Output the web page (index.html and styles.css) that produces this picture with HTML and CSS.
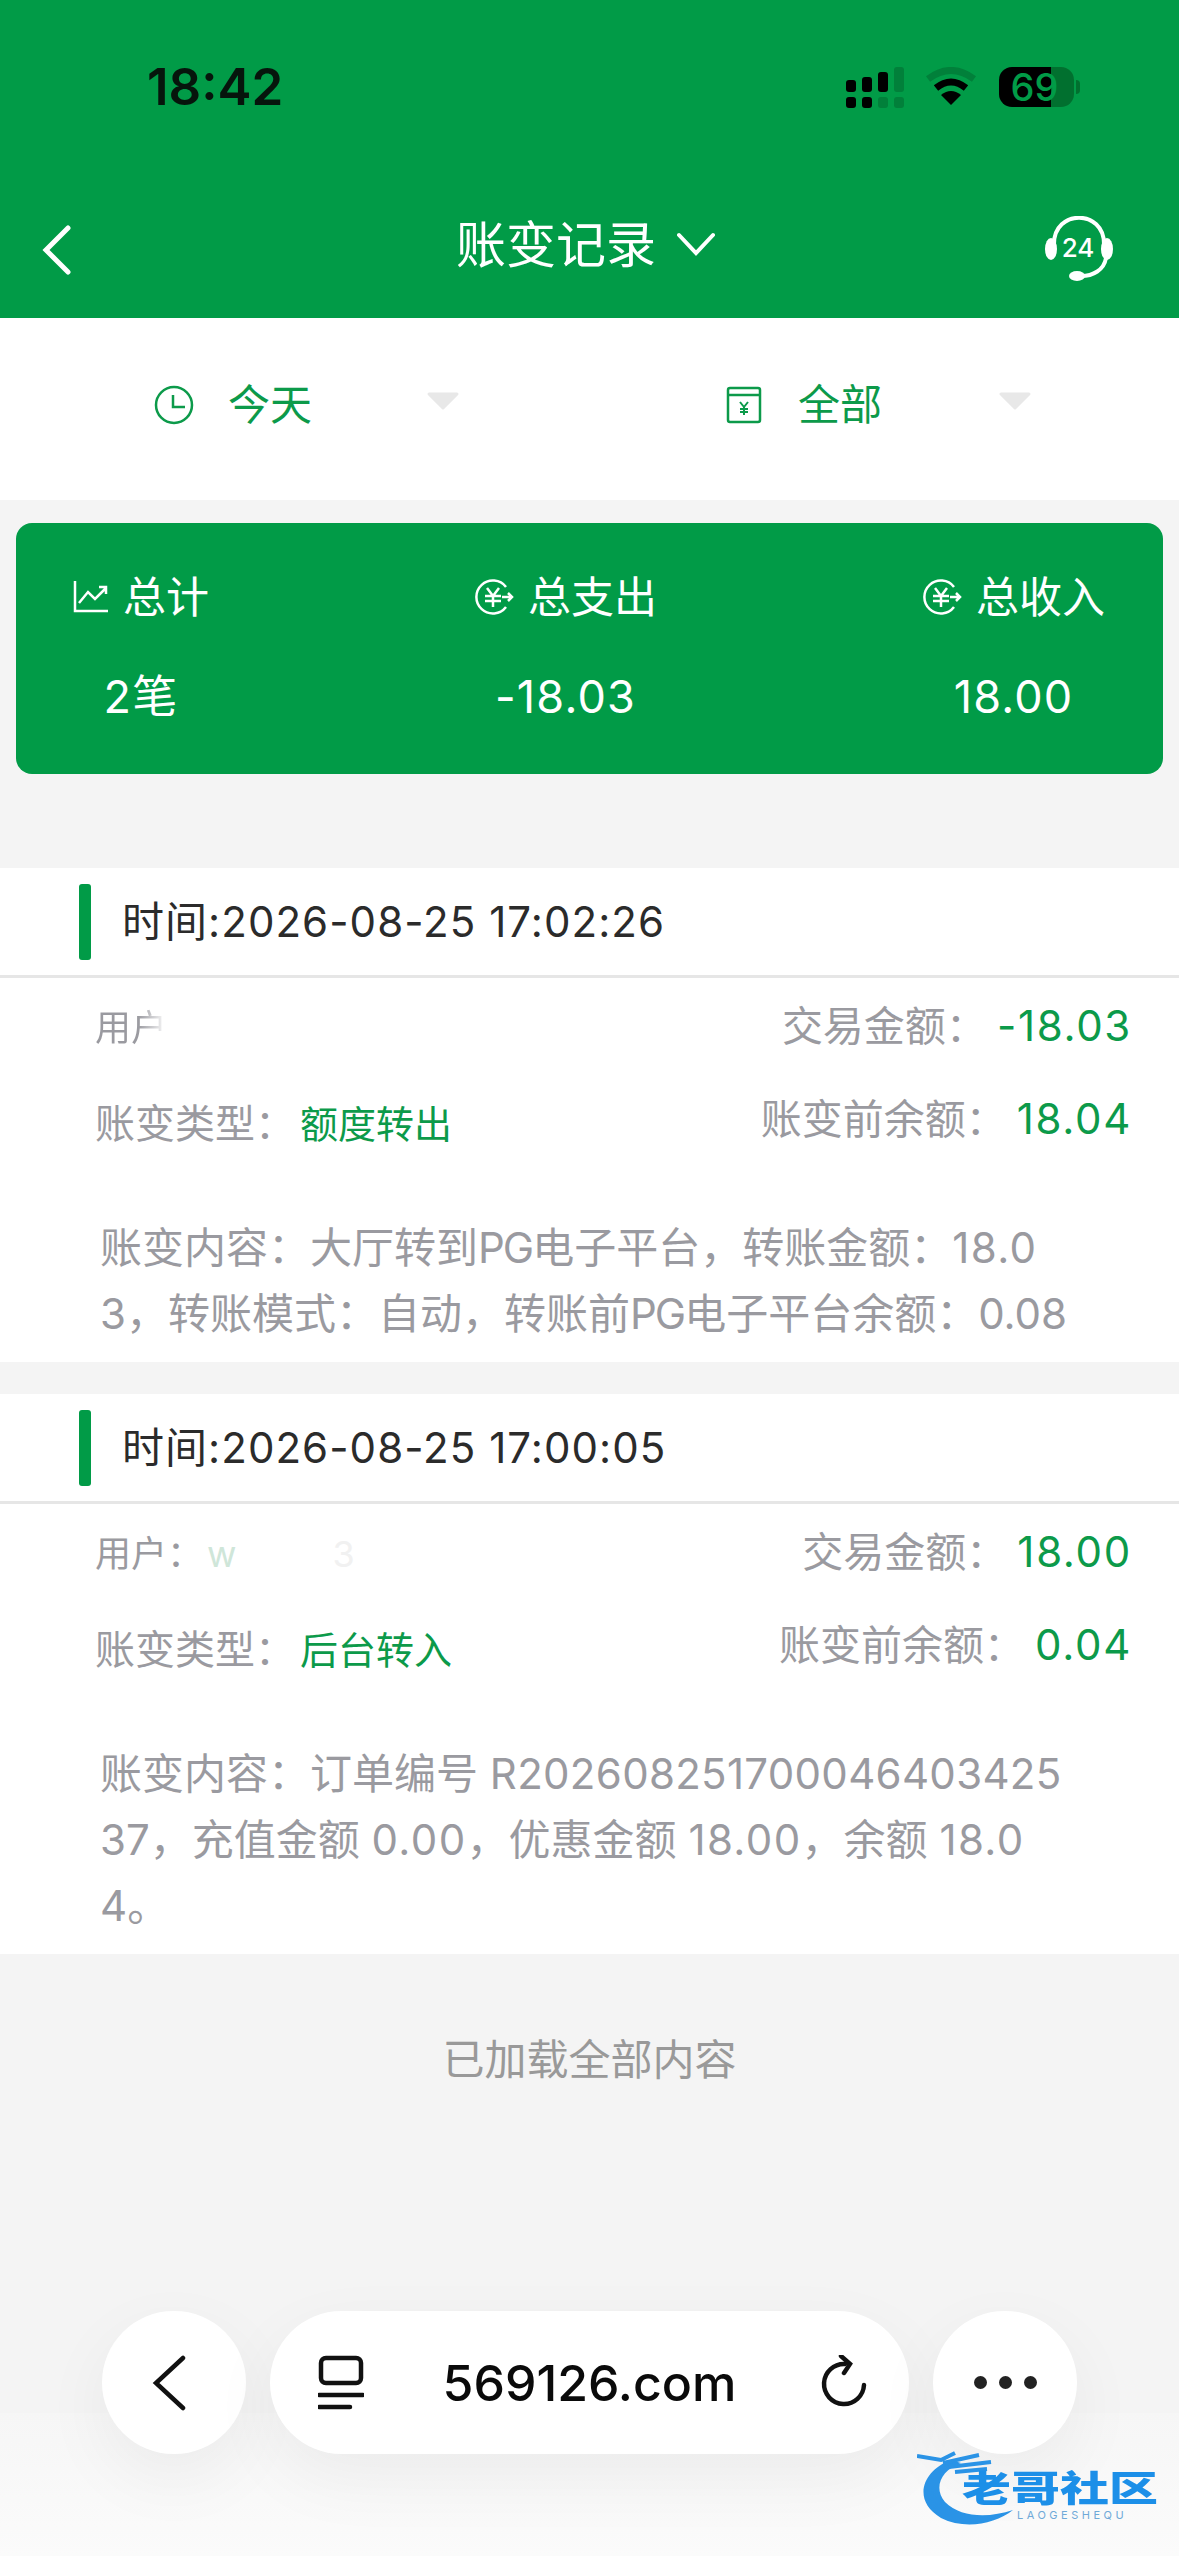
FILE: index.html
```html
<!DOCTYPE html>
<html lang="zh-CN">
<head>
    <meta charset="UTF-8">
    <meta name="viewport" content="width=device-width, initial-scale=1.0">
    <title>账变记录</title>
    <link rel="stylesheet" href="styles.css">
</head>
<body>
    <header class="top">
        <div class="status">
            <span class="clock-time">18:42</span>
            <div class="status-icons">
                <svg class="signal" width="58" height="41" viewBox="0 0 58 41">
                    <rect x="0" y="13" width="10" height="12" rx="3"/><rect x="16" y="10" width="10" height="15" rx="3"/><rect x="32" y="5" width="10" height="20" rx="3"/><rect class="dim" x="48" y="0" width="10" height="25" rx="3"/>
                    <rect x="0" y="30" width="10" height="11" rx="3"/><rect x="16" y="30" width="10" height="11" rx="3"/><rect class="dim" x="32" y="30" width="10" height="11" rx="3"/><rect class="dim" x="48" y="30" width="10" height="11" rx="3"/>
                </svg>
                <svg class="wifi" width="50" height="38" viewBox="0 0 50 38">
                    <path class="dim-line" d="M2 12 Q25 -5 48 12"/>
                    <path class="dark-line" d="M10 21 Q25 9 40 21"/>
                    <path d="M25 38 L15 28 Q25 20 35 28 Z"/>
                </svg>
                <div class="battery"><span class="battery-num">69</span></div>
            </div>
        </div>
        <nav class="nav">
            <svg class="nav-back" width="30" height="50" viewBox="0 0 30 50"><path d="M26 3 L4 25 L26 47"/></svg>
            <div class="nav-title">
                <span>账变记录</span>
                <svg class="nav-caret" width="38" height="24" viewBox="0 0 38 24"><path d="M2 3 L19 21 L36 3"/></svg>
            </div>
            <svg class="headset" width="68" height="66" viewBox="0 0 68 66">
                <path class="headset-band" d="M9 28 C9 -7 59 -7 59 28"/>
                <path class="headset-band" d="M61 42 C59 54 48 60 36 60"/>
                <ellipse cx="6" cy="33" rx="6" ry="11"/><ellipse cx="62" cy="33" rx="6" ry="11"/><ellipse cx="32" cy="60" rx="8" ry="5"/>
                <text class="headset-num" x="33" y="41">24</text>
            </svg>
        </nav>
    </header>

    <section class="filters">
        <div class="filter">
            <svg class="filter-icon" width="40" height="40" viewBox="0 0 40 40"><circle cx="20" cy="20" r="18"/><path d="M19 10 V22 H31"/></svg>
            <span class="filter-text">今天</span>
            <svg class="filter-arrow" width="34" height="20" viewBox="0 0 34 20"><path d="M3 3 H31 L17 17 Z"/></svg>
        </div>
        <div class="filter">
            <svg class="filter-icon" width="36" height="40" viewBox="0 0 36 40"><rect x="2" y="3" width="32" height="34" rx="2"/><path d="M2 10 H34"/><path class="thin" d="M14 17 L18 22 L22 17 M18 22 V30 M14 24 H22 M14 27 H22"/></svg>
            <span class="filter-text">全部</span>
            <svg class="filter-arrow" width="34" height="20" viewBox="0 0 34 20"><path d="M3 3 H31 L17 17 Z"/></svg>
        </div>
    </section>

    <section class="summary">
        <div class="summary-col">
            <div class="summary-label">
                <svg class="summary-icon" width="36" height="32" viewBox="0 0 36 32"><path d="M2 0 V30 H35"/><path d="M6 22 L15 11 L22 18 L33 7 M26 6 H33 V13"/></svg>
                <span>总计</span>
            </div>
            <div class="summary-value">2笔</div>
        </div>
        <div class="summary-col">
            <div class="summary-label">
                <svg class="summary-icon" width="40" height="36" viewBox="0 0 40 36"><path d="M32 8 A16.500 16.500 0 1 0 32 28"/><path d="M13 9 L19 17 L25 9 M19 17 V28 M11 17 H27 M11 22 H27 M28 18 H38 M34 14 L38 18 L34 22"/></svg>
                <span>总支出</span>
            </div>
            <div class="summary-value">-18.03</div>
        </div>
        <div class="summary-col">
            <div class="summary-label">
                <svg class="summary-icon" width="40" height="36" viewBox="0 0 40 36"><path d="M32 8 A16.500 16.500 0 1 0 32 28"/><path d="M13 9 L19 17 L25 9 M19 17 V28 M11 17 H27 M11 22 H27 M28 18 H38 M34 14 L38 18 L34 22"/></svg>
                <span>总收入</span>
            </div>
            <div class="summary-value">18.00</div>
        </div>
    </section>

    <article class="record record-first">
        <div class="record-head"><i class="record-bar"></i><span>时间:2026-08-25 17:02:26</span></div>
        <div class="meta">
            <div class="meta-left">
                <div class="meta-user"><span class="user-fade">用户</span></div>
                <div class="meta-type">账变类型：<span class="meta-type-val">额度转出</span></div>
            </div>
            <div class="meta-right">
                <div class="meta-amount">交易金额<span class="colon">：</span><span class="money">-18.03</span></div>
                <div class="meta-amount">账变前余额<span class="colon">：</span><span class="money">18.04</span></div>
            </div>
        </div>
        <p class="record-text">账变内容：大厅转到<span class="latin">PG</span>电子平台，转账金额：<span class="num">18.0</span>3，转账模式：自动，转账前<span class="latin">PG</span>电子平台余额：0.08</p>
    </article>

    <article class="record">
        <div class="record-head"><i class="record-bar"></i><span>时间:2026-08-25 17:00:05</span></div>
        <div class="meta">
            <div class="meta-left">
                <div class="meta-user">用户：<span class="user-name">w</span><span class="user-tail">3</span></div>
                <div class="meta-type">账变类型：<span class="meta-type-val">后台转入</span></div>
            </div>
            <div class="meta-right">
                <div class="meta-amount">交易金额<span class="colon">：</span><span class="money">18.00</span></div>
                <div class="meta-amount">账变前余额<span class="colon">：</span><span class="money">0.04</span></div>
            </div>
        </div>
        <p class="record-text">账变内容：订单编号 <span class="order-no">R202608251700046403425</span>37，充值金额 <span class="num">0.00</span>，优惠金额 <span class="num">18.00</span>，余额 <span class="num">18.0</span>4。</p>
    </article>

    <div class="loaded">已加载全部内容</div>

    <footer class="dock">
        <div class="dock-round">
            <svg class="dock-icon dock-back" width="34" height="56" viewBox="0 0 34 56"><path d="M31 3 L4 28 L31 53"/></svg>
        </div>
        <div class="dock-url">
            <svg class="dock-icon" width="46" height="56" viewBox="0 0 46 56"><rect x="3" y="3" width="40" height="25" rx="5"/><path d="M1 40 H45 M1 52 H32"/></svg>
            <span class="url-text">569126.com</span>
            <svg class="dock-icon reload" width="46" height="56" viewBox="0 0 46 56"><path d="M24 9 A20 20 0 1 0 43 30"/><path d="M20 1 L29 9 L23 18"/></svg>
        </div>
        <div class="dock-round">
            <div class="dots"><i></i><i></i><i></i></div>
        </div>
    </footer>

    <div class="watermark">
        <svg class="watermark-art" width="110" height="78" viewBox="0 0 110 78">
            <path class="swoosh" d="M34 10 C6 20 -6 50 24 68 C48 80 78 74 96 60 C72 68 44 68 28 52 C16 38 24 20 44 13 Z"/>
            <path class="dragon" d="M0 6 L24 10 L38 3 M26 13 L62 5 M32 17 L74 12 M38 22 L70 19"/>
        </svg>
        <span class="watermark-cn">老哥社区</span>
        <span class="watermark-en">LAOGESHEQU</span>
    </div>
</body>
</html>
```

FILE: styles.css
```css
* {
    box-sizing: border-box;
}
html, body {
    margin: 0;
    padding: 0;
}
body {
    position: relative;
    width: 1179px;
    height: 2556px;
    overflow: hidden;
    font-family: Inter, "Noto Sans CJK SC", sans-serif;
    background: linear-gradient(#f4f4f4 0, #f4f4f4 2413px, #f6f6f6 2413px, #fbfbfb 2556px);
    color: #333;
}

/* top green area */
.top {
    height: 318px;
    background: #019b47;
    color: white;
}
.status {
    height: 176px;
    padding: 59px 105px 0 147px;
    display: flex;
    justify-content: space-between;
    align-items: flex-start;
}
.clock-time {
    font-size: 51px;
    line-height: 56px;
    font-weight: 600;
    color: #06150c;
}
.status-icons {
    display: flex;
    align-items: flex-start;
    margin-top: 8px;
    fill: black;
}
.signal {
    margin-right: 22px;
}
.dim {
    fill: #01803a;
}
.wifi {
    margin-right: 23px;
}
.dim-line, .dark-line {
    fill: none;
    stroke-width: 7;
}
.dim-line {
    stroke: #01803a;
}
.dark-line {
    stroke: black;
}
.battery {
    position: relative;
    width: 75px;
    height: 40px;
    border-radius: 13px;
    background: linear-gradient(90deg, black 0, black 52px, #01702f 52px);
    text-align: center;
}
.battery::after {
    content: "";
    position: absolute;
    left: 77px;
    top: 13px;
    width: 4px;
    height: 14px;
    border-radius: 0 7px 7px 0;
    background: #01702f;
}
.battery-num {
    font-size: 38px;
    line-height: 40px;
    font-weight: 500;
    color: #019b47;
    margin-right: 4px;
}
.nav {
    position: relative;
    height: 142px;
    padding: 40px 66px 0 42px;
    display: flex;
    justify-content: space-between;
    align-items: flex-start;
}
.nav-back {
    margin-top: 9px;
    fill: none;
    stroke: white;
    stroke-width: 5;
    stroke-linecap: round;
}
.nav-title {
    position: absolute;
    left: 456px;
    top: 36px;
    display: flex;
    align-items: center;
    font-size: 50px;
    line-height: 66px;
}
.nav-caret {
    margin-left: 21px;
    margin-top: -2px;
    fill: none;
    stroke: white;
    stroke-width: 4;
    stroke-linecap: round;
}
.headset {
    fill: white;
}
.headset-band {
    fill: none;
    stroke: white;
    stroke-width: 4;
}
.headset-num {
    font-size: 26px;
    font-weight: 500;
    text-anchor: middle;
}

/* filter row */
.filters {
    height: 182px;
    padding: 67px 0 0 154px;
    background: white;
    display: flex;
    gap: 266px;
}
.filter {
    display: flex;
    align-items: flex-start;
    width: 306px;
    color: #0c9a4a;
}
.filter-icon {
    flex: none;
    fill: none;
    stroke: #0c9a4a;
    stroke-width: 2.500;
}
.thin {
    stroke-width: 2;
}
.filter-text {
    font-size: 42px;
    line-height: 40px;
    margin-left: 34px;
}
.filter-arrow {
    margin-left: auto;
    margin-top: 6px;
    fill: #e8e8e8;
    stroke: #e8e8e8;
    stroke-width: 3;
    stroke-linejoin: round;
}
.filter + .filter .filter-text {
    margin-left: 36px;
}

/* summary card */
.summary {
    height: 251px;
    margin: 23px 16px 0;
    padding: 50px 58px 0 57px;
    background: #019b47;
    border-radius: 16px;
    color: white;
    display: flex;
    justify-content: space-between;
}
.summary-col {
    text-align: center;
}
.summary-label {
    display: flex;
    align-items: center;
    gap: 14px;
    font-size: 43px;
    line-height: 48px;
}
.summary-icon {
    fill: none;
    stroke: white;
    stroke-width: 2.500;
}
.summary-value {
    margin-top: 52px;
    font-size: 45px;
    line-height: 48px;
    letter-spacing: 1.200px;
}

/* record blocks */
.record {
    margin-top: 32px;
    padding-bottom: 15px;
    background: white;
}
.record-first {
    margin-top: 94px;
}
.record-head {
    height: 110px;
    padding: 16px 0 0 79px;
    border-bottom: 3px solid #e6e6e6;
    display: flex;
    align-items: flex-start;
    font-size: 42px;
    line-height: 76px;
    letter-spacing: 1.050px;
    color: #2b2b2b;
}
.record-bar {
    width: 12px;
    height: 76px;
    margin-right: 31px;
    border-radius: 3px;
    background: #019b47;
}
.meta {
    padding: 16px 47px 0 95px;
    display: flex;
    justify-content: space-between;
}
.meta-left {
    padding-top: 4px;
    display: flex;
    flex-direction: column;
    gap: 36px;
}
.meta-right {
    display: flex;
    flex-direction: column;
    align-items: flex-end;
    gap: 33px;
}
.meta-user, .meta-type, .meta-amount {
    height: 60px;
    line-height: 60px;
    white-space: nowrap;
    color: #9a9aa0;
}
.meta-user {
    font-size: 36px;
}
.meta-type {
    font-size: 40px;
}
.meta-amount {
    font-size: 41px;
}
.colon {
    font-family: "Noto Sans CJK TC", sans-serif;
    font-size: 40px;
    margin-right: 11px;
}
.meta-type-val {
    margin-left: 5px;
    font-size: 38px;
    color: #0c9a4a;
}
.money {
    font-size: 42px;
    letter-spacing: 1.700px;
    color: #0c9a4a;
}
.user-fade {
    background: linear-gradient(90deg, #9a9aa0 0, #9a9aa0 60%, #ffffff 100%);
    -webkit-background-clip: text;
    background-clip: text;
    color: transparent;
}
.user-name {
    color: #cfe6d9;
    margin-left: 4px;
}
.user-tail {
    color: #f1f1f1;
    margin-left: 96px;
}
.record-text {
    margin: 61px 0 0;
    padding: 0 98px 0 100px;
    font-size: 42px;
    line-height: 66px;
    color: #9a9aa0;
    word-break: break-all;
}
.num {
    letter-spacing: 1.400px;
}
.latin {
    letter-spacing: -2px;
}
.order-no {
    letter-spacing: 0.300px;
}
.loaded {
    margin-top: 76px;
    font-size: 42px;
    line-height: 60px;
    text-align: center;
    color: #999;
}

/* browser toolbar at the bottom */
.dock {
    margin-top: 221px;
    padding-left: 102px;
    display: flex;
    gap: 24px;
}
.dock-round, .dock-url {
    height: 143px;
    background: white;
    border-radius: 72px;
    box-shadow: 0 24px 70px rgba(0, 0, 0, 0.05);
    display: flex;
    align-items: center;
    justify-content: center;
}
.dock-round {
    width: 144px;
}
.dock-url {
    width: 639px;
    padding: 0 42px 0 48px;
    justify-content: space-between;
}
.dock-icon {
    fill: none;
    stroke: #111;
    stroke-width: 4.500;
    stroke-linecap: round;
}
.dock-back {
    margin-right: 10px;
}
.url-text {
    margin-right: 6px;
    font-size: 50px;
    font-weight: 500;
    color: #0a0a0a;
}
.dots {
    display: flex;
    gap: 12px;
}
.dots i {
    width: 13px;
    height: 13px;
    border-radius: 50%;
    background: #222;
}

/* blue forum watermark over the corner */
.watermark {
    position: absolute;
    left: 917px;
    top: 2450px;
    width: 245px;
    height: 78px;
    color: #1c8fe8;
}
.watermark-art {
    position: absolute;
    left: 0;
    top: 0;
    filter: blur(0.6px);
}
.swoosh {
    fill: #2a93e6;
}
.dragon {
    fill: none;
    stroke: #2a93e6;
    stroke-width: 4;
}
.watermark-cn {
    position: absolute;
    left: 45px;
    top: 16px;
    font-size: 36px;
    line-height: 46px;
    font-weight: 900;
    white-space: nowrap;
    transform: scaleX(1.36);
    transform-origin: left center;
}
.watermark-en {
    position: absolute;
    left: 100px;
    top: 60px;
    font-size: 11px;
    line-height: 11px;
    letter-spacing: 3.500px;
    color: #6fa9d8;
}
```
